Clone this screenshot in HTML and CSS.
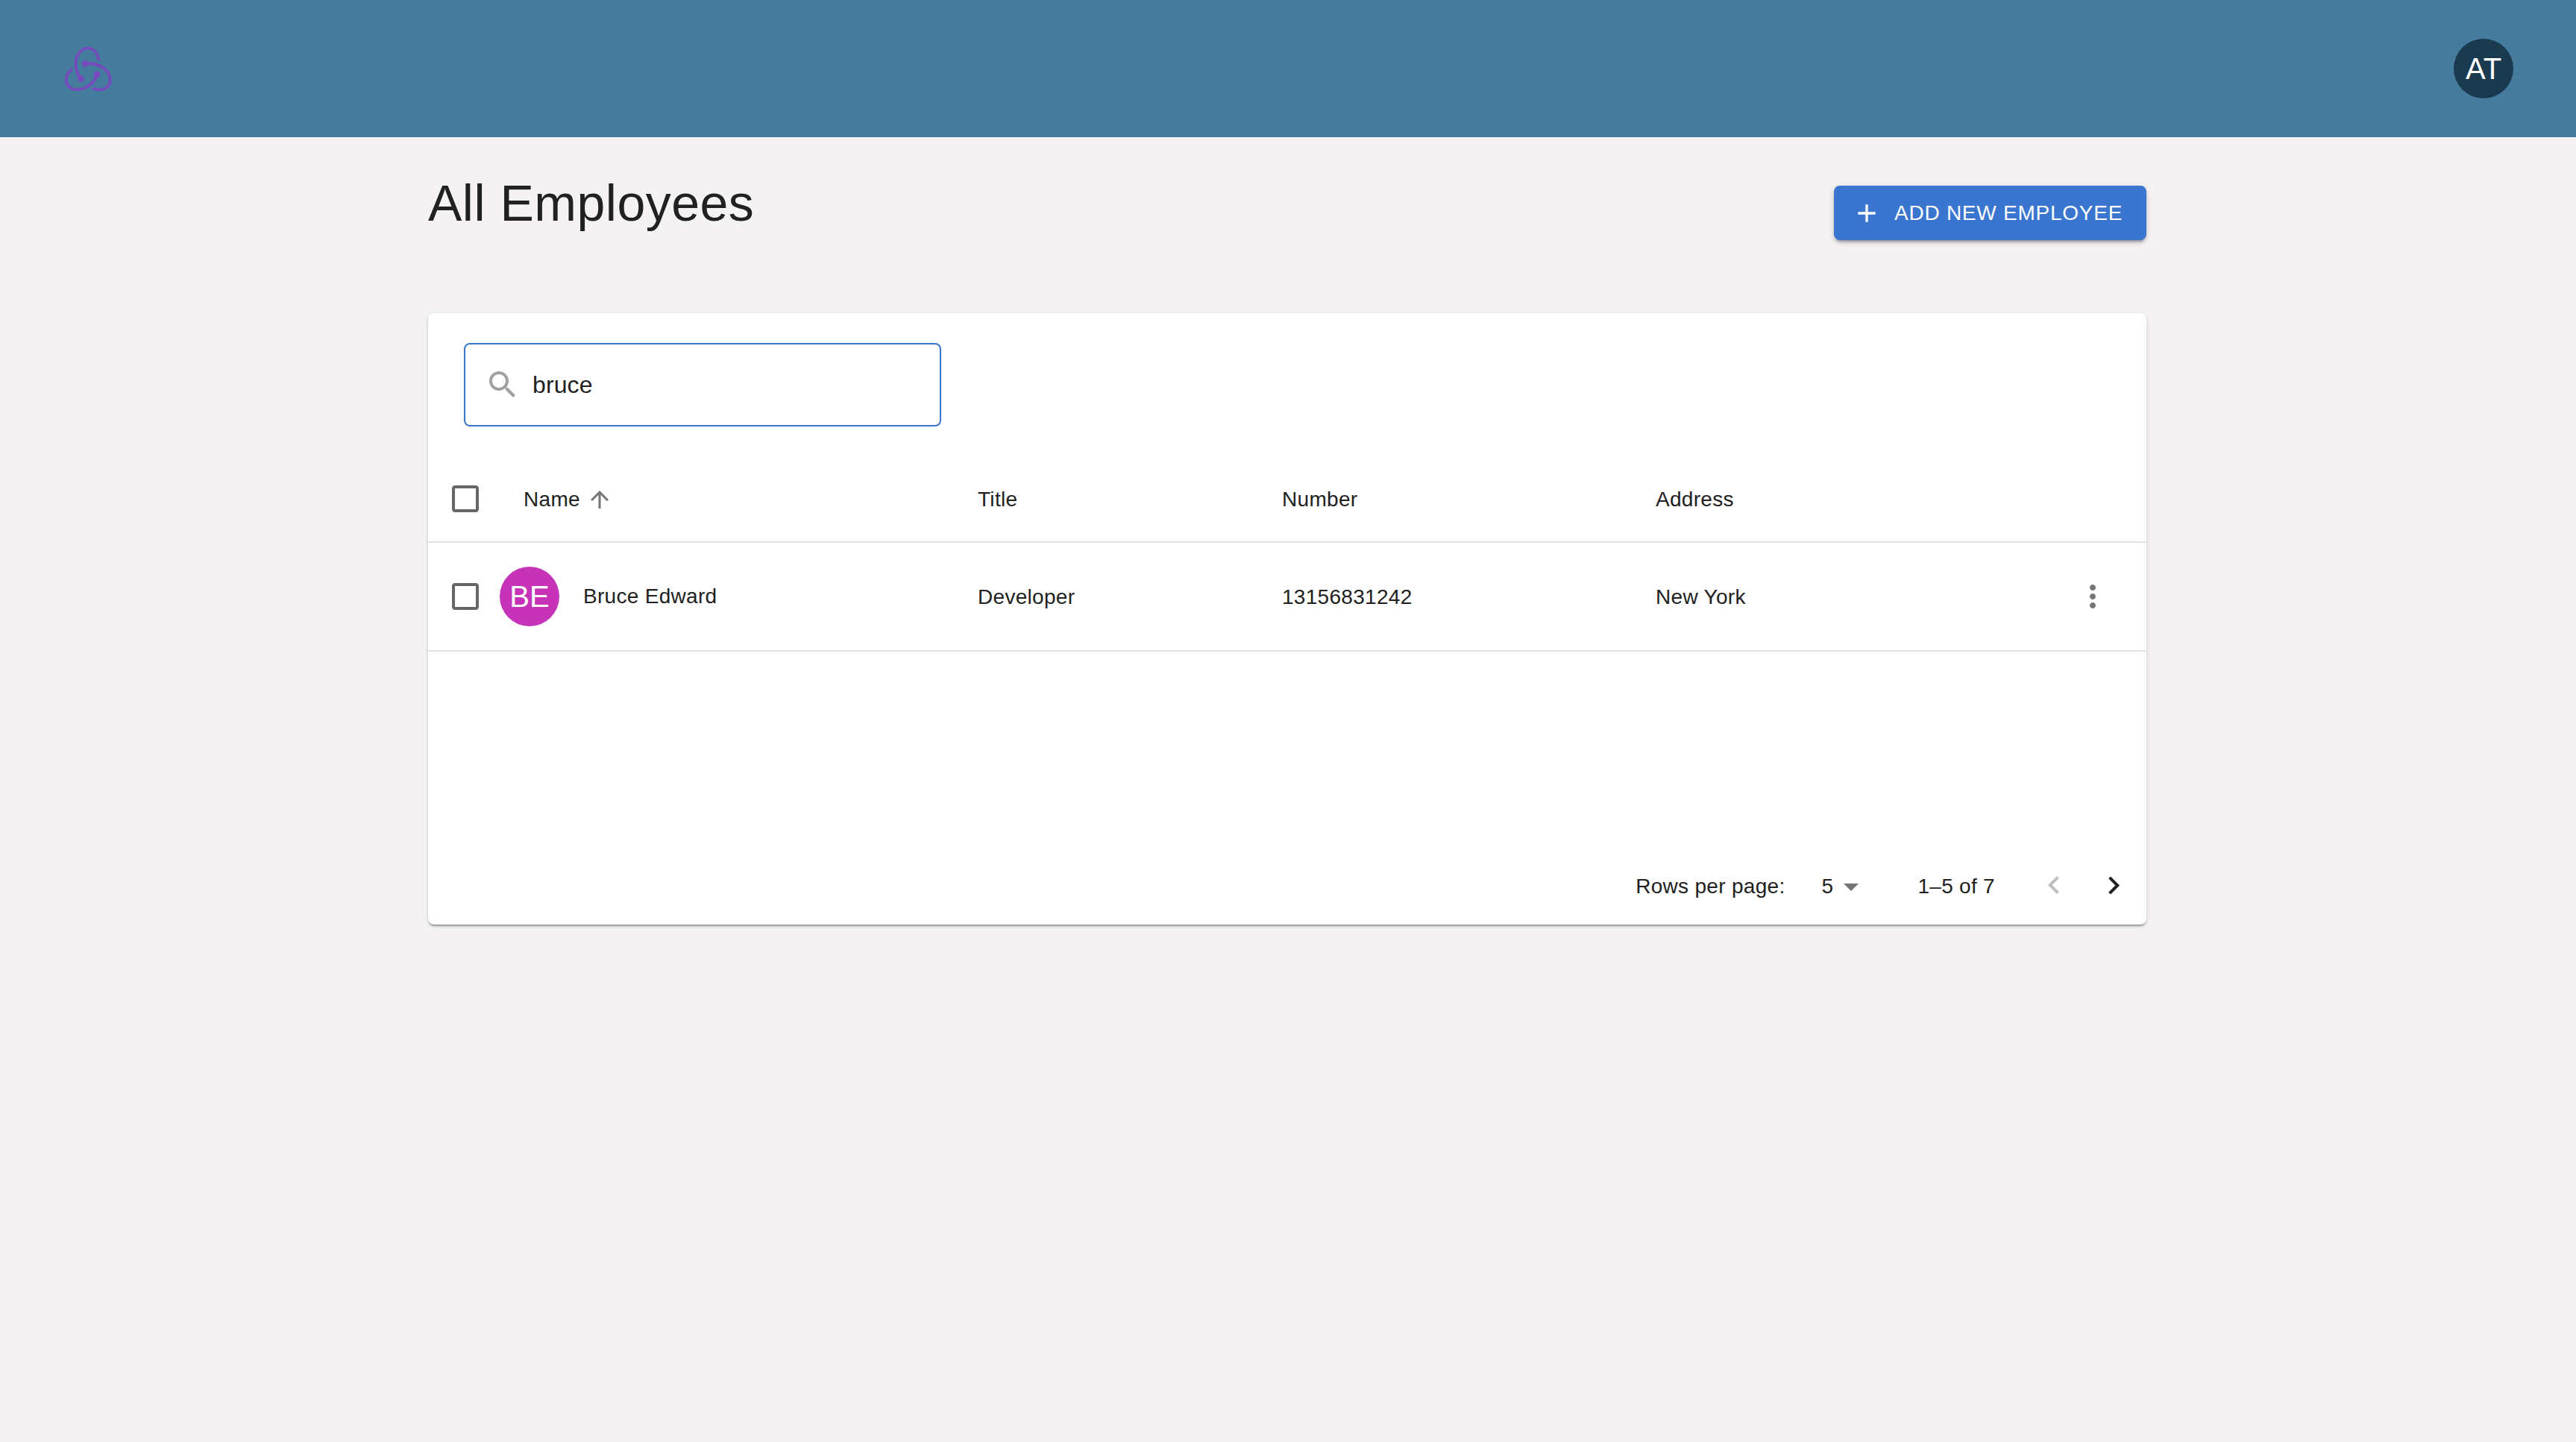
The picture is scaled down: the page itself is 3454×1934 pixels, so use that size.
FILE: index.html
```html
<!DOCTYPE html>
<html lang="en">
<head>
    <meta charset="UTF-8">
    <title>All Employees</title>
    <link rel="stylesheet" href="styles.css">
</head>
<body>
    <header class="topbar">
        <svg class="logo" viewBox="0 0 24 24"><path d="M16.634 16.504c.87-.075 1.543-.84 1.5-1.754-.047-.914-.796-1.648-1.709-1.648h-.061a1.71 1.71 0 00-1.648 1.769c.03.479.226.869.494 1.153-1.048 2.038-2.621 3.536-5.005 4.795-1.603.838-3.296 1.154-4.944.93-1.378-.195-2.456-.81-3.116-1.799-.988-1.499-1.078-3.116-.255-4.734.6-1.17 1.499-2.023 2.099-2.443a9.96 9.96 0 01-.42-1.543C-.868 14.408-.416 18.752.932 20.805c1.004 1.498 3.057 2.456 5.304 2.456.6 0 1.23-.044 1.843-.194 3.897-.749 6.848-3.086 8.556-6.549zm5.348-3.774c-2.323-2.728-5.738-4.226-9.63-4.226h-.495c-.255-.554-.84-.899-1.498-.899h-.045c-.943 0-1.678.81-1.647 1.753.03.898.794 1.648 1.708 1.648h.06a1.69 1.69 0 001.499-1.049h.54c2.291 0 4.469.674 6.442 1.978 1.498 1.004 2.576 2.308 3.177 3.896.509 1.288.48 2.547-.06 3.597-.84 1.603-2.29 2.486-4.196 2.486-1.199 0-2.367-.375-2.967-.644-.36.298-.96.793-1.394 1.093 1.318.598 2.652.943 3.94.943 2.922 0 5.094-1.647 5.919-3.236.898-1.798.824-4.824-1.44-7.39zM6.49 17.042c.03.899.793 1.648 1.708 1.648h.06a1.688 1.688 0 001.648-1.768c0-.9-.779-1.647-1.693-1.647h-.06c-.06 0-.15 0-.226.029-1.243-2.098-1.768-4.347-1.572-6.772.12-1.828.72-3.417 1.797-4.735.9-1.124 2.593-1.68 3.747-1.708 3.236-.061 4.585 3.971 4.689 5.574l1.498.45C17.741 3.197 14.686.62 11.764.62 9.02.62 6.49 2.613 5.47 5.535 4.077 9.43 4.991 13.177 6.7 16.174c-.15.195-.24.539-.21.868z"/></svg>
        <div class="avatar avatar-user">AT</div>
    </header>

    <main class="content">
        <div class="page-head">
            <h1 class="page-title">All Employees</h1>
            <button class="add-btn" type="button">
                <svg class="add-icon" viewBox="0 0 24 24"><path d="M19 13h-6v6h-2v-6H5v-2h6V5h2v6h6v2z"/></svg>
                Add New Employee
            </button>
        </div>

        <section class="card">
            <div class="search">
                <svg class="icon search-icon" viewBox="0 0 24 24"><path d="M15.5 14h-.79l-.28-.27C15.41 12.59 16 11.11 16 9.5 16 5.91 13.09 3 9.5 3S3 5.91 3 9.5 5.91 16 9.5 16c1.61 0 3.09-.59 4.23-1.57l.27.28v.79l5 4.99L20.49 19l-4.99-5zm-6 0C7.01 14 5 11.99 5 9.5S7.01 5 9.5 5 14 7.01 14 9.5 11.99 14 9.5 14z"/></svg>
                <span class="search-text">bruce</span>
            </div>

            <div class="row row-head">
                <div class="cell-check">
                    <svg class="icon check-icon" viewBox="0 0 24 24"><path d="M19 5v14H5V5h14m0-2H5c-1.1 0-2 .9-2 2v14c0 1.1.9 2 2 2h14c1.1 0 2-.9 2-2V5c0-1.1-.9-2-2-2z"/></svg>
                </div>
                <div class="cell-text cell-name-head">
                    Name
                    <svg class="sort-icon" viewBox="0 0 24 24"><path d="M4 12l1.41 1.41L11 7.83V20h2V7.83l5.58 5.59L20 12l-8-8-8 8z"/></svg>
                </div>
                <div class="cell-text">Title</div>
                <div class="cell-text">Number</div>
                <div class="cell-text">Address</div>
                <div></div>
            </div>

            <div class="row row-body">
                <div class="cell-check">
                    <svg class="icon check-icon" viewBox="0 0 24 24"><path d="M19 5v14H5V5h14m0-2H5c-1.1 0-2 .9-2 2v14c0 1.1.9 2 2 2h14c1.1 0 2-.9 2-2V5c0-1.1-.9-2-2-2z"/></svg>
                </div>
                <div class="cell-name">
                    <div class="avatar avatar-row">BE</div>
                    <span>Bruce Edward</span>
                </div>
                <div class="cell-text">Developer</div>
                <div class="cell-text">13156831242</div>
                <div class="cell-text">New York</div>
                <div class="cell-more">
                    <svg class="icon more-icon" viewBox="0 0 24 24"><path d="M12 8c1.1 0 2-.9 2-2s-.9-2-2-2-2 .9-2 2 .9 2 2 2zm0 2c-1.1 0-2 .9-2 2s.9 2 2 2 2-.9 2-2-.9-2-2-2zm0 6c-1.1 0-2 .9-2 2s.9 2 2 2 2-.9 2-2-.9-2-2-2z"/></svg>
                </div>
            </div>

            <div class="spacer"></div>

            <div class="pager">
                <span>Rows per page:</span>
                <div class="page-size">
                    <span>5</span>
                    <svg class="icon drop-icon" viewBox="0 0 24 24"><path d="M7 10l5 5 5-5z"/></svg>
                </div>
                <span class="page-count">1–5 of 7</span>
                <svg class="icon chevron chevron-off" viewBox="0 0 24 24"><path d="M15.41 16.09l-4.58-4.59 4.58-4.59L14 5.5l-6 6 6 6z"/></svg>
                <svg class="icon chevron chevron-next" viewBox="0 0 24 24"><path d="M8.59 16.34l4.58-4.59-4.58-4.59L10 5.75l6 6-6 6z"/></svg>
            </div>
        </section>
    </main>
</body>
</html>
```

FILE: styles.css
```css
body {
    margin: 0;
    min-height: 1934px;
    background-color: #f4f2f3;
    color: #212121;
    font-family: "Liberation Sans", Arial, sans-serif;
    font-size: 28px;
    letter-spacing: 0.3px;
}
.topbar {
    height: 184px;
    padding: 0 84px 0 87px;
    display: flex;
    align-items: center;
    justify-content: space-between;
    background-color: #457b9d;
}
.logo {
    width: 63px;
    height: 63px;
    fill: #764abc;
}
.avatar {
    width: 80px;
    height: 80px;
    border-radius: 50%;
    display: flex;
    align-items: center;
    justify-content: center;
    color: white;
    font-size: 40px;
    letter-spacing: 0;
    flex-shrink: 0;
}
.avatar-user {
    background-color: #1a3a4f;
}
.avatar-row {
    background-color: #c633b9;
}
.content {
    width: 2304px;
    margin-left: 574px;
    padding-top: 46px;
}
.page-head {
    height: 190px;
    display: flex;
    justify-content: space-between;
    align-items: flex-start;
}
.page-title {
    margin: 0;
    font-size: 68px;
    font-weight: 400;
    line-height: 84px;
    letter-spacing: 0.5px;
}
.add-btn {
    height: 73px;
    margin-top: 19px;
    width: 419px;
    padding: 0 0 0 24px;
    display: flex;
    align-items: center;
    gap: 17px;
    background-color: #3a75cf;
    color: white;
    border: none;
    border-radius: 8px;
    font-family: inherit;
    font-size: 28px;
    letter-spacing: 0.75px;
    text-transform: uppercase;
    box-shadow: 0 6px 2px -4px rgba(0, 0, 0, 0.2), 0 4px 4px 0 rgba(0, 0, 0, 0.14), 0 2px 10px 0 rgba(0, 0, 0, 0.12);
}
.add-icon {
    width: 40px;
    height: 40px;
    fill: white;
}
.card {
    height: 820px;
    display: flex;
    flex-direction: column;
    background: white;
    border-radius: 8px;
    box-shadow: 0 4px 2px -2px rgba(0, 0, 0, 0.2), 0 2px 2px 0 rgba(0, 0, 0, 0.14), 0 2px 6px 0 rgba(0, 0, 0, 0.12);
}
.icon {
    width: 48px;
    height: 48px;
    flex-shrink: 0;
}
.search {
    box-sizing: border-box;
    width: 640px;
    height: 112px;
    margin: 40px 0 40px 48px;
    padding-left: 26px;
    display: flex;
    align-items: center;
    gap: 16px;
    border: 2px solid #3a75cf;
    border-radius: 8px;
}
.search-icon {
    fill: #a0a0a0;
}
.search-text {
    font-size: 32px;
    letter-spacing: 0.1px;
}
.row {
    display: grid;
    grid-template-columns: 96px 641px 408px 501px 1fr 96px;
    align-items: center;
    border-bottom: 2px solid #e0e0e0;
}
.row-head {
    height: 114px;
}
.row-body {
    height: 144px;
}
.cell-text {
    padding-top: 2px;
}
.cell-check {
    display: flex;
    padding-left: 26px;
}
.check-icon {
    fill: #666666;
}
.cell-name-head {
    display: flex;
    align-items: center;
    padding-left: 32px;
}
.sort-icon {
    width: 36px;
    height: 36px;
    margin-left: 8px;
    fill: #757575;
}
.cell-name {
    display: flex;
    align-items: center;
    gap: 32px;
}
.cell-more {
    display: flex;
}
.more-icon {
    fill: #757575;
}
.spacer {
    flex: 1;
}
.pager {
    height: 104px;
    padding-right: 20px;
    padding-top: 1px;
    box-sizing: border-box;
    display: flex;
    align-items: center;
    justify-content: flex-end;
}
.page-size {
    margin-left: 49px;
    display: flex;
    align-items: center;
}
.drop-icon {
    fill: #757575;
}
.page-count {
    margin: 0 55px 0 65px;
}
.chevron {
    margin-top: -2px;
}
.chevron-off {
    fill: #bdbdbd;
}
.chevron-next {
    margin-left: 32px;
    fill: #212121;
}
```
